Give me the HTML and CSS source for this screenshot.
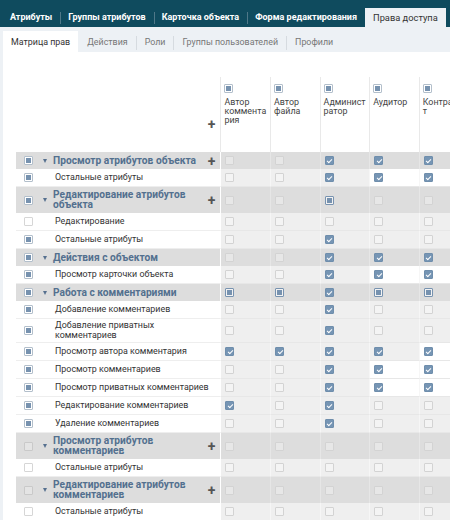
FILE: index.html
```html
<!DOCTYPE html>
<html lang="ru">
<head>
<meta charset="utf-8">
<title>Права доступа</title>
<link rel="stylesheet" href="styles.css">
</head>
<body>
<div class="tabs">
  <div class="tab">Атрибуты</div><span class="sep"></span>
  <div class="tab">Группы атрибутов</div><span class="sep"></span>
  <div class="tab">Карточка объекта</div><span class="sep"></span>
  <div class="tab">Форма редактирования</div>
  <div class="tab active">Права доступа</div>
</div>
<div class="subtabs">
  <div class="subtab active">Матрица прав</div>
  <div class="subtab">Действия</div><span class="ssep"></span>
  <div class="subtab">Роли</div><span class="ssep"></span>
  <div class="subtab">Группы пользователей</div><span class="ssep"></span>
  <div class="subtab">Профили</div>
</div>
<div class="panel">
<table class="matrix">
  <thead>
    <tr>
      <th class="corner"><span class="hplus">+</span></th>
      <th class="col"><span class="cb hp"></span><div class="cname">Автор комментария</div></th>
      <th class="col"><span class="cb hp"></span><div class="cname">Автор файла</div></th>
      <th class="col"><span class="cb hp"></span><div class="cname">Администратор</div></th>
      <th class="col"><span class="cb hp"></span><div class="cname">Аудитор</div></th>
      <th class="col"><span class="cb hp"></span><div class="cname">Контрагент</div></th>
      <th class="col"><span class="cb hp"></span><div class="cname">Пользователь</div></th>
    </tr>
  </thead>
  <tbody>
    <tr class="grp">
      <td class="name"><div class="nm"><span class="cb lp"></span><span class="caret"></span><span class="glbl">Просмотр атрибутов объекта</span><span class="plus">+</span></div></td>
      <td class="c"><span class="cb"></span></td><td class="c"><span class="cb"></span></td><td class="c"><span class="cb on"></span></td><td class="c"><span class="cb on"></span></td><td class="c"><span class="cb on"></span></td><td class="c"><span class="cb"></span></td>
    </tr>
    <tr class="itm">
      <td class="name"><div class="nm"><span class="cb lp"></span><span class="ilbl">Остальные атрибуты</span></div></td>
      <td class="c"><span class="cb"></span></td><td class="c"><span class="cb"></span></td><td class="c"><span class="cb on"></span></td><td class="c w"><span class="cb on"></span></td><td class="c w"><span class="cb on"></span></td><td class="c"><span class="cb"></span></td>
    </tr>
    <tr class="grp two">
      <td class="name"><div class="nm"><span class="cb lp"></span><span class="caret"></span><span class="glbl">Редактирование атрибутов<br>объекта</span><span class="plus">+</span></div></td>
      <td class="c"><span class="cb"></span></td><td class="c"><span class="cb"></span></td><td class="c"><span class="cb cp"></span></td><td class="c"><span class="cb"></span></td><td class="c"><span class="cb"></span></td><td class="c"><span class="cb"></span></td>
    </tr>
    <tr class="itm">
      <td class="name"><div class="nm"><span class="cb lu"></span><span class="ilbl">Редактирование</span></div></td>
      <td class="c"><span class="cb"></span></td><td class="c"><span class="cb"></span></td><td class="c"><span class="cb"></span></td><td class="c"><span class="cb"></span></td><td class="c"><span class="cb"></span></td><td class="c"><span class="cb"></span></td>
    </tr>
    <tr class="itm">
      <td class="name"><div class="nm"><span class="cb lp"></span><span class="ilbl">Остальные атрибуты</span></div></td>
      <td class="c"><span class="cb"></span></td><td class="c"><span class="cb"></span></td><td class="c"><span class="cb on"></span></td><td class="c"><span class="cb"></span></td><td class="c"><span class="cb"></span></td><td class="c"><span class="cb"></span></td>
    </tr>
    <tr class="grp">
      <td class="name"><div class="nm"><span class="cb lp"></span><span class="caret"></span><span class="glbl">Действия с объектом</span></div></td>
      <td class="c"><span class="cb"></span></td><td class="c"><span class="cb"></span></td><td class="c"><span class="cb on"></span></td><td class="c"><span class="cb on"></span></td><td class="c"><span class="cb on"></span></td><td class="c"><span class="cb"></span></td>
    </tr>
    <tr class="itm">
      <td class="name"><div class="nm"><span class="cb lp"></span><span class="ilbl">Просмотр карточки объекта</span></div></td>
      <td class="c"><span class="cb"></span></td><td class="c"><span class="cb"></span></td><td class="c"><span class="cb on"></span></td><td class="c w"><span class="cb on"></span></td><td class="c w"><span class="cb on"></span></td><td class="c"><span class="cb"></span></td>
    </tr>
    <tr class="grp">
      <td class="name"><div class="nm"><span class="cb lp"></span><span class="caret"></span><span class="glbl">Работа с комментариями</span></div></td>
      <td class="c"><span class="cb cp"></span></td><td class="c"><span class="cb cp"></span></td><td class="c"><span class="cb on"></span></td><td class="c"><span class="cb cp"></span></td><td class="c"><span class="cb cp"></span></td><td class="c"><span class="cb"></span></td>
    </tr>
    <tr class="itm">
      <td class="name"><div class="nm"><span class="cb lp"></span><span class="ilbl">Добавление комментариев</span></div></td>
      <td class="c"><span class="cb"></span></td><td class="c"><span class="cb"></span></td><td class="c"><span class="cb on"></span></td><td class="c"><span class="cb"></span></td><td class="c"><span class="cb"></span></td><td class="c"><span class="cb"></span></td>
    </tr>
    <tr class="itm two">
      <td class="name"><div class="nm"><span class="cb lp"></span><span class="ilbl">Добавление приватных<br>комментариев</span></div></td>
      <td class="c"><span class="cb"></span></td><td class="c"><span class="cb"></span></td><td class="c"><span class="cb on"></span></td><td class="c"><span class="cb"></span></td><td class="c"><span class="cb"></span></td><td class="c"><span class="cb"></span></td>
    </tr>
    <tr class="itm">
      <td class="name"><div class="nm"><span class="cb lp"></span><span class="ilbl">Просмотр автора комментария</span></div></td>
      <td class="c"><span class="cb on"></span></td><td class="c"><span class="cb on"></span></td><td class="c"><span class="cb on"></span></td><td class="c"><span class="cb on"></span></td><td class="c w"><span class="cb on"></span></td><td class="c"><span class="cb"></span></td>
    </tr>
    <tr class="itm">
      <td class="name"><div class="nm"><span class="cb lp"></span><span class="ilbl">Просмотр комментариев</span></div></td>
      <td class="c"><span class="cb"></span></td><td class="c"><span class="cb"></span></td><td class="c"><span class="cb on"></span></td><td class="c w"><span class="cb on"></span></td><td class="c w"><span class="cb on"></span></td><td class="c"><span class="cb"></span></td>
    </tr>
    <tr class="itm">
      <td class="name"><div class="nm"><span class="cb lp"></span><span class="ilbl">Просмотр приватных комментариев</span></div></td>
      <td class="c"><span class="cb"></span></td><td class="c"><span class="cb"></span></td><td class="c"><span class="cb on"></span></td><td class="c w"><span class="cb on"></span></td><td class="c w"><span class="cb on"></span></td><td class="c"><span class="cb"></span></td>
    </tr>
    <tr class="itm">
      <td class="name"><div class="nm"><span class="cb lp"></span><span class="ilbl">Редактирование комментариев</span></div></td>
      <td class="c"><span class="cb on"></span></td><td class="c"><span class="cb"></span></td><td class="c"><span class="cb on"></span></td><td class="c"><span class="cb"></span></td><td class="c"><span class="cb"></span></td><td class="c"><span class="cb"></span></td>
    </tr>
    <tr class="itm">
      <td class="name"><div class="nm"><span class="cb lp"></span><span class="ilbl">Удаление комментариев</span></div></td>
      <td class="c"><span class="cb"></span></td><td class="c"><span class="cb"></span></td><td class="c"><span class="cb on"></span></td><td class="c"><span class="cb"></span></td><td class="c"><span class="cb"></span></td><td class="c"><span class="cb"></span></td>
    </tr>
    <tr class="grp two">
      <td class="name"><div class="nm"><span class="cb gu"></span><span class="caret"></span><span class="glbl">Просмотр атрибутов<br>комментариев</span><span class="plus">+</span></div></td>
      <td class="c"><span class="cb"></span></td><td class="c"><span class="cb"></span></td><td class="c"><span class="cb"></span></td><td class="c"><span class="cb"></span></td><td class="c"><span class="cb"></span></td><td class="c"><span class="cb"></span></td>
    </tr>
    <tr class="itm">
      <td class="name"><div class="nm"><span class="cb lu"></span><span class="ilbl">Остальные атрибуты</span></div></td>
      <td class="c"><span class="cb"></span></td><td class="c"><span class="cb"></span></td><td class="c"><span class="cb"></span></td><td class="c"><span class="cb"></span></td><td class="c"><span class="cb"></span></td><td class="c"><span class="cb"></span></td>
    </tr>
    <tr class="grp two">
      <td class="name"><div class="nm"><span class="cb gu"></span><span class="caret"></span><span class="glbl">Редактирование атрибутов<br>комментариев</span><span class="plus">+</span></div></td>
      <td class="c"><span class="cb"></span></td><td class="c"><span class="cb"></span></td><td class="c"><span class="cb"></span></td><td class="c"><span class="cb"></span></td><td class="c"><span class="cb"></span></td><td class="c"><span class="cb"></span></td>
    </tr>
    <tr class="itm">
      <td class="name"><div class="nm"><span class="cb lu"></span><span class="ilbl">Остальные атрибуты</span></div></td>
      <td class="c"><span class="cb"></span></td><td class="c"><span class="cb"></span></td><td class="c"><span class="cb"></span></td><td class="c"><span class="cb"></span></td><td class="c"><span class="cb"></span></td><td class="c"><span class="cb"></span></td>
    </tr>
  </tbody>
</table>
</div>
</body>
</html>
```
FILE: styles.css
```css
* { box-sizing: border-box; }
html, body {
  margin: 0;
  padding: 0;
  width: 450px;
  height: 520px;
  overflow: hidden;
  background: #edf1f5;
  font-family: Roboto, "Noto Sans", "Liberation Sans", sans-serif;
  color: #333;
}

/* top tabs */
.tabs {
  display: flex;
  align-items: flex-end;
  height: 27px;
  background: #0f4b5e;
  padding-left: 2px;
}
.tab {
  height: 19px;
  line-height: 19px;
  padding: 0 8px 0 8px;
  color: #fff;
  font-weight: bold;
  font-size: 9px;
  white-space: nowrap;
}
.sep + .tab { padding-left: 7px; }
.tab.active {
  background: #edf1f5;
  color: #333;
  font-weight: normal;
  font-size: 9.3px;
}
.sep {
  width: 1px;
  height: 12px;
  margin-bottom: 3px;
  background: #4f7888;
}

/* sub tabs */
.subtabs {
  display: flex;
  align-items: flex-end;
  height: 25px;
  padding-left: 3px;
}
.subtab {
  height: 21px;
  line-height: 22px;
  padding: 0 8px;
  font-size: 8.9px;
  color: #777;
  white-space: nowrap;
}
.subtab.active {
  background: #fff;
  color: #333;
  margin-right: 1px;
}
.ssep {
  width: 1px;
  height: 14px;
  margin-bottom: 2px;
  background: #d6dbe0;
}

/* panel */
.panel {
  margin-left: 3px;
  background: #fff;
  padding: 25px 0 0 13px;
  height: 500px;
  overflow: hidden;
}
.matrix {
  border-collapse: separate;
  border-spacing: 0;
  table-layout: fixed;
  width: 502px;
}
.matrix th, .matrix td {
  box-sizing: content-box;
  padding: 0;
}
.corner {
  width: 202px;
  height: 75px;
  vertical-align: top;
  text-align: right;
  padding: 37px 5px 0 0 !important;
  box-sizing: border-box !important;
}
.hplus, .plus {
  font-size: 14px;
  font-weight: bold;
  line-height: 10px;
  color: #555;
}
.col {
  width: 49px;
  height: 75px;
  border-left: 1px solid #e9e9e9;
  vertical-align: top;
  text-align: left;
  font-weight: normal;
  padding: 7px 0 0 3px !important;
  box-sizing: border-box !important;
}
.cname {
  margin-top: 5px;
  margin-right: -1px;
  font-size: 8.9px;
  line-height: 9px;
  color: #444;
  overflow-wrap: anywhere;
}

/* checkboxes */
.cb {
  display: block;
  position: relative;
  width: 9px;
  height: 9px;
  border: 1px solid #d3d3d3;
  border-radius: 1px;
  background: rgba(255, 255, 255, 0.3);
  flex: none;
}
.cb.on {
  background: #7695b4;
  border-color: #6f8eac;
}
.cb.on::after {
  content: "";
  position: absolute;
  left: 2.5px;
  top: 0.5px;
  width: 2px;
  height: 4px;
  border: solid #fff;
  border-width: 0 1px 1px 0;
  transform: rotate(45deg);
}
.cb.cp, .cb.hp, .cb.lp {
  background: #fff;
}
.cb.cp { border-color: #7893b0; background: #f2f2f2; }
.cb.hp, .cb.lp { border-color: #b3bfcb; }
.cb.cp::after, .cb.hp::after, .cb.lp::after {
  content: "";
  position: absolute;
  left: 1px;
  top: 1px;
  width: 5px;
  height: 5px;
  background: #7792af;
}
.cb.lu { background: #fff; border-color: #d6d6d6; }
.cb.gu { background: #e4e4e4; border-color: #c9c9c9; }

/* rows */
.name {
  width: 202px;
  vertical-align: middle;
}
.nm {
  display: flex;
  align-items: center;
  padding: 0 5px 0 8px;
}
.caret {
  width: 0;
  height: 0;
  border-left: 2.5px solid transparent;
  border-right: 2.5px solid transparent;
  border-top: 4px solid #56708f;
  margin: 0 6px 0 10px;
  flex: none;
}
.glbl {
  flex: 1;
  font-size: 10.2px;
  font-weight: bold;
  line-height: 10px;
  color: #53708f;
  white-space: nowrap;
}
.ilbl {
  flex: 1;
  margin-left: 22px;
  font-size: 8.9px;
  line-height: 9.5px;
  color: #333;
  white-space: nowrap;
}
.plus { margin-left: auto; }

.c {
  width: 45px;
  border-left: 1px solid #f6f6f6;
  padding-left: 4px !important;
  vertical-align: middle;
  background: #efefef;
}
.name + .c { border-left-color: #fff; }

.grp td { height: 17px; background: #dddddd; }
.grp .c { border-left-color: #e6e6e6; }
.grp .name + .c { border-left-color: #fff; }
.grp.two td { height: 26px; }

.itm td { height: 17px; border-bottom: 1px solid #e7e7e7; }
.itm .name { background: #fff; border-bottom-color: #eeeeee; }
.itm.two td { height: 23px; }
.c.w { background: #fff; }
```
